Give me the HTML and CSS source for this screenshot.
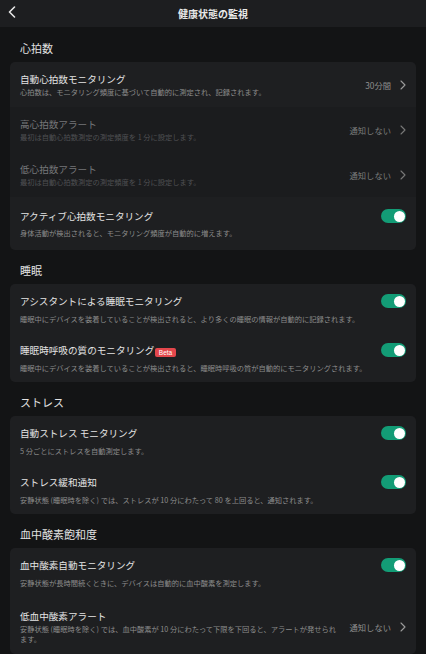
FILE: index.html
```html
<!DOCTYPE html>
<html lang="ja">
<head>
    <meta charset="UTF-8">
    <meta name="viewport" content="width=device-width, initial-scale=1.0">
    <title>健康状態の監視</title>
    <link rel="stylesheet" href="styles.css">
</head>
<body>
    <header class="topbar">
        <button class="back" aria-label="戻る">
            <svg width="8" height="12" viewBox="0 0 8 12"><path d="M6.5 1 L1.5 6 L6.5 11" fill="none" stroke="#e6e6e6" stroke-width="1.6" stroke-linecap="round" stroke-linejoin="round"/></svg>
        </button>
        <h1>健康状態の監視</h1>
    </header>

    <main class="page">
        <h2 class="section-title">心拍数</h2>
        <div class="card">
            <div class="row nav">
                <div class="text">
                    <p class="title">自動心拍数モニタリング</p>
                    <p class="desc">心拍数は、モニタリング頻度に基づいて自動的に測定され、記録されます。</p>
                </div>
                <span class="value">30分間</span>
                <svg class="chev" width="6" height="10" viewBox="0 0 6 10"><path d="M1 1 L5 5 L1 9" fill="none" stroke="#9a9a9a" stroke-width="1.1" stroke-linecap="round" stroke-linejoin="round"/></svg>
            </div>
            <div class="row nav dim">
                <div class="text">
                    <p class="title">高心拍数アラート</p>
                    <p class="desc">最初は自動心拍数測定の測定頻度を 1 分に設定します。</p>
                </div>
                <span class="value">通知しない</span>
                <svg class="chev" width="6" height="10" viewBox="0 0 6 10"><path d="M1 1 L5 5 L1 9" fill="none" stroke="#777" stroke-width="1.1" stroke-linecap="round" stroke-linejoin="round"/></svg>
            </div>
            <div class="row nav dim">
                <div class="text">
                    <p class="title">低心拍数アラート</p>
                    <p class="desc">最初は自動心拍数測定の測定頻度を 1 分に設定します。</p>
                </div>
                <span class="value">通知しない</span>
                <svg class="chev" width="6" height="10" viewBox="0 0 6 10"><path d="M1 1 L5 5 L1 9" fill="none" stroke="#777" stroke-width="1.1" stroke-linecap="round" stroke-linejoin="round"/></svg>
            </div>
            <div class="row toggle-row tall">
                <div class="row-head">
                    <p class="title">アクティブ心拍数モニタリング</p>
                    <span class="switch on"></span>
                </div>
                <p class="desc">身体活動が検出されると、モニタリング頻度が自動的に増えます。</p>
            </div>
        </div>

        <h2 class="section-title">睡眠</h2>
        <div class="card">
            <div class="row toggle-row">
                <div class="row-head">
                    <p class="title">アシスタントによる睡眠モニタリング</p>
                    <span class="switch on"></span>
                </div>
                <p class="desc">睡眠中にデバイスを装着していることが検出されると、より多くの睡眠の情報が自動的に記録されます。</p>
            </div>
            <div class="row toggle-row">
                <div class="row-head">
                    <p class="title">睡眠時呼吸の質のモニタリング<span class="badge">Beta</span></p>
                    <span class="switch on"></span>
                </div>
                <p class="desc">睡眠中にデバイスを装着していることが検出されると、睡眠時呼吸の質が自動的にモニタリングされます。</p>
            </div>
        </div>

        <h2 class="section-title">ストレス</h2>
        <div class="card">
            <div class="row toggle-row">
                <div class="row-head">
                    <p class="title">自動ストレス モニタリング</p>
                    <span class="switch on"></span>
                </div>
                <p class="desc">5 分ごとにストレスを自動測定します。</p>
            </div>
            <div class="row toggle-row">
                <div class="row-head">
                    <p class="title">ストレス緩和通知</p>
                    <span class="switch on"></span>
                </div>
                <p class="desc">安静状態 (睡眠時を除く) では、ストレスが 10 分にわたって 80 を上回ると、通知されます。</p>
            </div>
        </div>

        <h2 class="section-title">血中酸素飽和度</h2>
        <div class="card">
            <div class="row toggle-row">
                <div class="row-head">
                    <p class="title">血中酸素自動モニタリング</p>
                    <span class="switch on"></span>
                </div>
                <p class="desc">安静状態が長時間続くときに、デバイスは自動的に血中酸素を測定します。</p>
            </div>
            <div class="row nav last">
                <div class="text">
                    <p class="title">低血中酸素アラート</p>
                    <p class="desc">安静状態 (睡眠時を除く) では、血中酸素が 10 分にわたって下限を下回ると、アラートが発せられます。</p>
                </div>
                <span class="value">通知しない</span>
                <svg class="chev" width="6" height="10" viewBox="0 0 6 10"><path d="M1 1 L5 5 L1 9" fill="none" stroke="#9a9a9a" stroke-width="1.1" stroke-linecap="round" stroke-linejoin="round"/></svg>
            </div>
        </div>
    </main>
</body>
</html>
```

FILE: styles.css
```css
* {
    box-sizing: border-box;
}

body {
    margin: 0;
    background: #131415;
    color: #e4e4e4;
    font-family: "Noto Sans CJK JP", "Noto Sans", sans-serif;
}

p, h1, h2 {
    margin: 0;
}

.topbar {
    height: 27px;
    background: #1d1e20;
    display: flex;
    align-items: center;
    justify-content: center;
    position: relative;
}

.topbar h1 {
    font-size: 10px;
    font-weight: bold;
    color: #e8e8e8;
    line-height: 14px;
}

.back {
    position: absolute;
    left: 8px;
    top: 6px;
    padding: 0;
    border: 0;
    background: none;
    display: flex;
}

.page {
    padding: 1px 10px 0;
}

.section-title {
    font-size: 11px;
    font-weight: normal;
    color: #e2e2e2;
    line-height: 16px;
    padding: 12px 10px 6px;
}

.card {
    background: #1e1f21;
    border-radius: 5px;
    overflow: hidden;
}

.row {
    padding: 10px 10px 10px;
}

.title {
    font-size: 9.6px;
    line-height: 14px;
    color: #e4e4e4;
    white-space: nowrap;
}

.desc {
    font-size: 7.25px;
    line-height: 10px;
    color: #8c8c8c;
}

.nav {
    display: flex;
    align-items: center;
    min-height: 45px;
}

.nav .text {
    flex: 1;
    min-width: 0;
}

.nav .desc {
    margin-top: 1px;
}

.nav.last {
    padding-top: 12px;
}

.value {
    font-size: 8.3px;
    color: #8f8f8f;
    margin-left: 8px;
    margin-right: 9px;
    white-space: nowrap;
}

.chev {
    flex: none;
}

.dim {
    background: #1b1c1e;
}

.dim .title {
    color: #76777a;
}

.dim .desc {
    color: #4f5053;
}

.dim .value {
    color: #7c7c7c;
}

.toggle-row {
    padding: 10px 10px 9px;
}

.toggle-row.tall {
    padding: 12px 10px 12px;
}

.row-head {
    display: flex;
    align-items: center;
    justify-content: space-between;
    height: 14px;
    margin-bottom: 6px;
}

.toggle-row.tall .row-head {
    margin-bottom: 5px;
}

.switch {
    width: 25px;
    height: 14px;
    border-radius: 7px;
    background: #3a3b3e;
    position: relative;
    flex: none;
}

.switch::after {
    content: "";
    position: absolute;
    top: 1.5px;
    left: 1.5px;
    width: 11px;
    height: 11px;
    border-radius: 50%;
    background: #fff;
}

.switch.on {
    background: #139c76;
}

.switch.on::after {
    left: 12.5px;
}

.badge {
    display: inline-block;
    vertical-align: middle;
    margin-left: 1px;
    margin-top: 2px;
    padding: 0 3.5px;
    border-radius: 2px;
    background: #e4474c;
    color: #fff;
    font-family: "Liberation Sans", sans-serif;
    font-size: 6.5px;
    line-height: 9px;
}
```
